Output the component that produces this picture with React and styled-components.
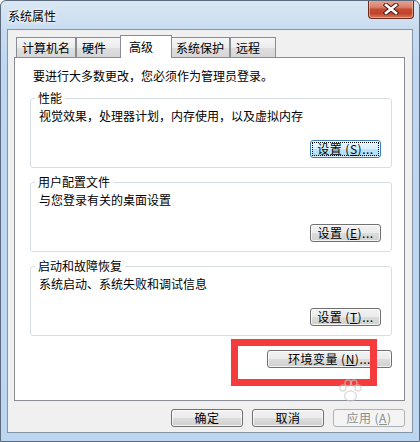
import styled, { createGlobalStyle, css } from "styled-components";

const GlobalStyle = createGlobalStyle`
  html, body {
    margin: 0;
    padding: 0;
    background: #ffffff;
  }
  body {
    font-family: "Noto Sans CJK SC", "Liberation Sans", sans-serif;
    font-size: 12px;
    color: #000;
  }
`;

const Frame = styled.div`
  position: relative;
  width: 420px;
  height: 442px;
  box-sizing: border-box;
  border: 1px solid #5b6b7d;
  border-radius: 6px 6px 0 0;
  padding: 0 6px 8px 6px;
  display: flex;
  flex-direction: column;
  overflow: hidden;
  background: linear-gradient(
    to bottom,
    #d9e7f4 0px,
    #c9dcf0 28px,
    #bfd7f0 60px,
    #bcd6f1 100%
  );
`;

const TitleBar = styled.div`
  height: 28px;
  display: flex;
  align-items: flex-start;
`;

const Title = styled.div`
  margin-left: 1px;
  padding-top: 7px;
  line-height: 16px;
  font-size: 12px;
  color: #000;
  text-shadow: 0 0 6px #fff, 0 0 3px #fff, 0 0 2px #fff;
`;

const CloseButton = styled.div`
  margin-left: auto;
  margin-right: -1px;
  margin-top: -1px;
  width: 46px;
  height: 19px;
  box-sizing: border-box;
  border: 1px solid #6b2a1f;
  border-top: none;
  border-radius: 0 0 4px 4px;
  background: linear-gradient(
    to bottom,
    #e7a798 0%,
    #d8806c 40%,
    #c54a30 52%,
    #c0442b 75%,
    #d67a5e 100%
  );
  box-shadow: inset 0 0 0 1px rgba(255, 200, 185, 0.55);
  display: flex;
  align-items: center;
  justify-content: center;
`;

const Client = styled.div`
  flex: 1;
  display: flex;
  flex-direction: column;
  background: #f0f0f0;
  border: 1px solid #8595a8;
  padding: 5px 7px 0 6px;
`;

const TabStrip = styled.div`
  height: 22px;
  display: flex;
  align-items: flex-end;
  padding-left: 2px;
`;

const Tab = styled.div`
  box-sizing: border-box;
  min-width: 46px;
  height: 20px;
  padding: 0 5px;
  line-height: 20px;
  border: 1px solid #898c95;
  border-bottom: none;
  background: linear-gradient(
    to bottom,
    #f6f6f6 0%,
    #ececec 50%,
    #dfdfdf 51%,
    #d6d6d6 100%
  );
  white-space: nowrap;

  ${(p) =>
    p.$active &&
    css`
      position: relative;
      z-index: 1;
      height: 23px;
      margin: 0 -2px -1px -2px;
      padding: 0 8px;
      min-width: 52px;
      line-height: 22px;
      background: #ffffff;
    `}
`;

const Panel = styled.div`
  position: relative;
  box-sizing: border-box;
  height: 344px;
  background: #ffffff;
  border: 1px solid #898c95;
  padding: 10px 12px 0 15px;
`;

const Intro = styled.div`
  margin-left: 3px;
  line-height: 16px;
`;

const Group = styled.fieldset`
  margin: 6px 0 0 0;
  padding: 2px 10px 9px 8px;
  border: 1px solid #d5dfe5;
  border-radius: 3px;
  min-width: 0;
`;

const Legend = styled.legend`
  margin-left: -4px;
  padding: 0 3px;
  line-height: 16px;
`;

const Desc = styled.div`
  line-height: 16px;
`;

const ButtonRow = styled.div`
  display: flex;
  justify-content: flex-end;
  gap: ${(p) => p.$gap || 0}px;
  margin-top: ${(p) => p.$top || 0}px;
  padding-right: ${(p) => p.$right || 0}px;
`;

const Button = styled.button`
  box-sizing: border-box;
  width: ${(p) => p.$w}px;
  height: 18px;
  padding: 0;
  font-family: inherit;
  font-size: 12px;
  line-height: 16px;
  color: #000;
  border: 1px solid #707070;
  border-radius: 3px;
  background: linear-gradient(
    to bottom,
    #f2f2f2 0%,
    #ebebeb 50%,
    #dddddd 51%,
    #cfcfcf 100%
  );
  box-shadow: inset 0 0 0 1px rgba(255, 255, 255, 0.75);
  letter-spacing: 0.5px;

  u {
    text-decoration: underline;
    text-underline-offset: 1px;
  }

  ${(p) =>
    p.$focused &&
    css`
      border-color: #3c7fb1;
      background: linear-gradient(
        to bottom,
        #eaf6fd 0%,
        #d9f0fc 50%,
        #bee6fd 51%,
        #a7d9f5 100%
      );
      box-shadow: inset 0 0 0 1px rgba(255, 255, 255, 0.6);
      outline: 1px dotted #000;
      outline-offset: -3px;
    `}

  ${(p) =>
    p.$disabled &&
    css`
      color: #8d8d8d;
      border-color: #adb2b5;
      background: #f4f4f4;
      box-shadow: none;
    `}
`;

const Key = styled.span`
  margin-left: 3px;
`;

const Highlight = styled.div`
  position: absolute;
  left: 216px;
  top: 281px;
  width: 146px;
  height: 47px;
  box-sizing: border-box;
  border: 7px solid #f53b3b;
  pointer-events: none;
`;

const Watermark = styled.svg`
  position: absolute;
  left: 336px;
  top: 378px;
  pointer-events: none;
`;

const CloseIcon = () => (
  <svg width="16" height="12" viewBox="0 0 16 12">
    <path
      d="M3 2 L13 10 M13 2 L3 10"
      stroke="#4a1a12"
      strokeWidth="4.5"
      strokeLinecap="square"
    />
    <path
      d="M3 2 L13 10 M13 2 L3 10"
      stroke="#ffffff"
      strokeWidth="2.6"
      strokeLinecap="square"
    />
  </svg>
);

const Paw = () => (
  <Watermark width="26" height="24" viewBox="0 0 26 24">
    <g fill="none" stroke="rgba(200,200,200,0.6)" strokeWidth="1.5">
      <circle cx="6" cy="9" r="3" />
      <circle cx="11" cy="4" r="3" />
      <circle cx="17" cy="4" r="3" />
      <circle cx="21" cy="9" r="3" />
      <ellipse cx="13.5" cy="17" rx="6" ry="5" />
    </g>
  </Watermark>
);

const tabs = ["计算机名", "硬件", "高级", "系统保护", "远程"];

const groups = [
  {
    title: "性能",
    desc: "视觉效果，处理器计划，内存使用，以及虚拟内存",
    key: "S",
    focused: true,
  },
  { title: "用户配置文件", desc: "与您登录有关的桌面设置", key: "E" },
  { title: "启动和故障恢复", desc: "系统启动、系统失败和调试信息", key: "T" },
];

const App = () => (
  <>
    <GlobalStyle />
    <Frame>
      <TitleBar>
        <Title>系统属性</Title>
        <CloseButton>
          <CloseIcon />
        </CloseButton>
      </TitleBar>
      <Client>
        <TabStrip>
          {tabs.map((t) => (
            <Tab key={t} $active={t === "高级"}>
              {t}
            </Tab>
          ))}
        </TabStrip>
        <Panel>
          <Intro>要进行大多数更改，您必须作为管理员登录。</Intro>
          {groups.map((g) => (
            <Group key={g.title}>
              <Legend>{g.title}</Legend>
              <Desc>{g.desc}</Desc>
              <ButtonRow $top={16}>
                <Button $w={71} $focused={g.focused}>
                  设置<Key>(<u>{g.key}</u>)...</Key>
                </Button>
              </ButtonRow>
            </Group>
          ))}
          <ButtonRow $top={14}>
            <Button $w={125}>
              环境变量<Key>(<u>N</u>)...</Key>
            </Button>
          </ButtonRow>
          <Highlight />
        </Panel>
        <ButtonRow $top={8} $gap={9}>
          <Button $w={72}>确定</Button>
          <Button $w={72}>取消</Button>
          <Button $w={72} $disabled>
            应用<Key>(<u>A</u>)</Key>
          </Button>
        </ButtonRow>
      </Client>
      <Paw />
    </Frame>
  </>
);

export default App;
